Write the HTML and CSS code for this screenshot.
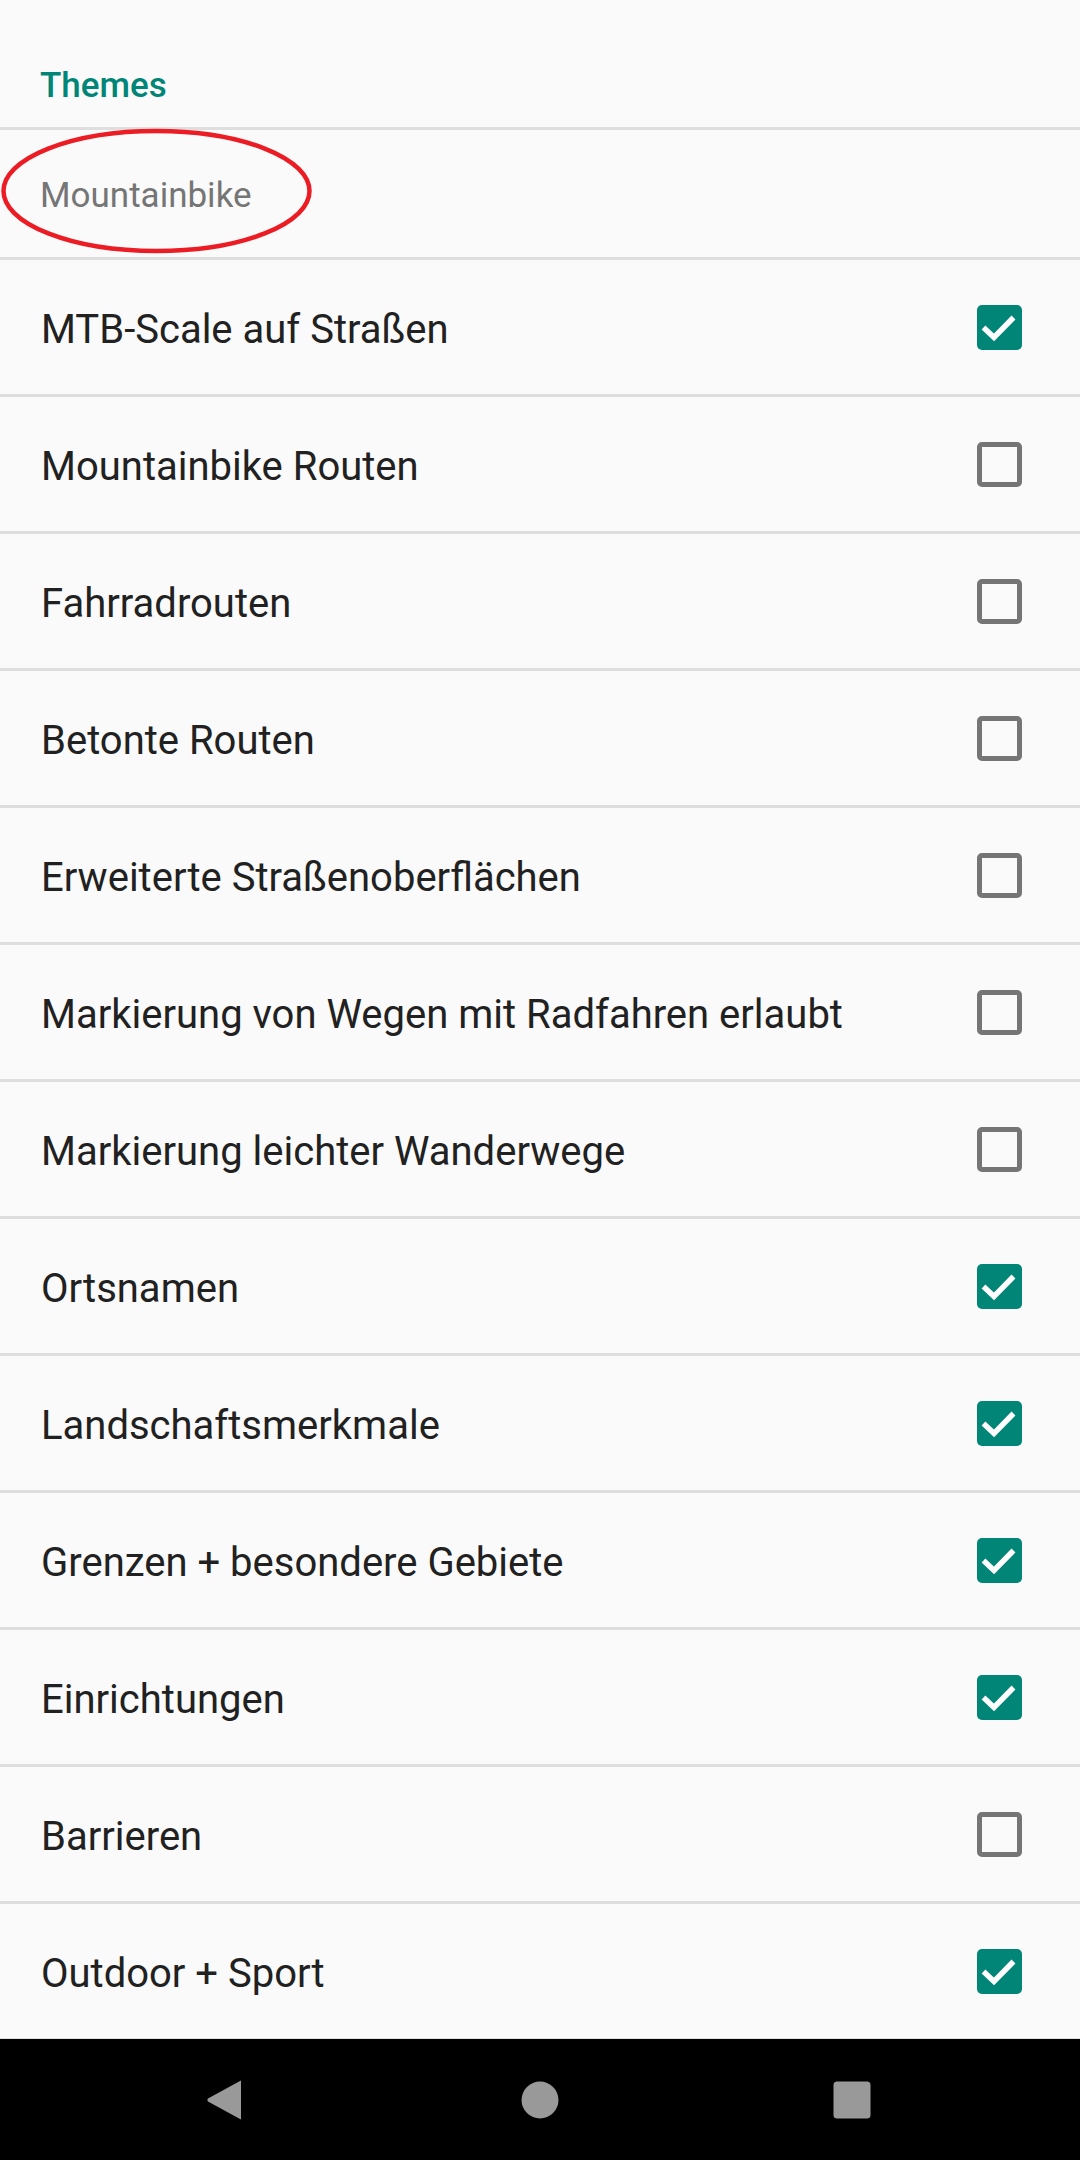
FILE: index.html
```html
<!DOCTYPE html>
<html lang="de">
<head>
<meta charset="utf-8">
<title>Themes</title>
<link rel="stylesheet" href="styles.css">
</head>
<body>
<div class="screen">
  <div class="content">
    <div class="header"><span class="header-title">Themes</span></div>
    <div class="category"><span class="category-title">Mountainbike</span></div>
    <svg class="annotation" width="316" height="132" viewBox="0 0 316 132">
      <ellipse cx="156.5" cy="63" rx="153" ry="60" fill="none" stroke="#ec1c24" stroke-width="4.5"/>
    </svg>
    <ul class="list">
      <li class="item"><span class="label">MTB-Scale auf Straßen</span><span class="box checked"><svg viewBox="0 0 45 45" width="45" height="45"><path d="M6.5 22.5 L17 32.5 L36.5 12.5" fill="none" stroke="#fff" stroke-width="5.5"/></svg></span></li>
      <li class="item"><span class="label">Mountainbike Routen</span><span class="box"></span></li>
      <li class="item"><span class="label">Fahrradrouten</span><span class="box"></span></li>
      <li class="item"><span class="label">Betonte Routen</span><span class="box"></span></li>
      <li class="item"><span class="label">Erweiterte Straßenoberflächen</span><span class="box"></span></li>
      <li class="item"><span class="label">Markierung von Wegen mit Radfahren erlaubt</span><span class="box"></span></li>
      <li class="item"><span class="label">Markierung leichter Wanderwege</span><span class="box"></span></li>
      <li class="item"><span class="label">Ortsnamen</span><span class="box checked"><svg viewBox="0 0 45 45" width="45" height="45"><path d="M6.5 22.5 L17 32.5 L36.5 12.5" fill="none" stroke="#fff" stroke-width="5.5"/></svg></span></li>
      <li class="item"><span class="label">Landschaftsmerkmale</span><span class="box checked"><svg viewBox="0 0 45 45" width="45" height="45"><path d="M6.5 22.5 L17 32.5 L36.5 12.5" fill="none" stroke="#fff" stroke-width="5.5"/></svg></span></li>
      <li class="item"><span class="label">Grenzen + besondere Gebiete</span><span class="box checked"><svg viewBox="0 0 45 45" width="45" height="45"><path d="M6.5 22.5 L17 32.5 L36.5 12.5" fill="none" stroke="#fff" stroke-width="5.5"/></svg></span></li>
      <li class="item"><span class="label">Einrichtungen</span><span class="box checked"><svg viewBox="0 0 45 45" width="45" height="45"><path d="M6.5 22.5 L17 32.5 L36.5 12.5" fill="none" stroke="#fff" stroke-width="5.5"/></svg></span></li>
      <li class="item"><span class="label">Barrieren</span><span class="box"></span></li>
      <li class="item"><span class="label">Outdoor + Sport</span><span class="box checked"><svg viewBox="0 0 45 45" width="45" height="45"><path d="M6.5 22.5 L17 32.5 L36.5 12.5" fill="none" stroke="#fff" stroke-width="5.5"/></svg></span></li>
    </ul>
  </div>
  <nav class="navbar">
    <svg class="nav-back" width="40" height="44" viewBox="0 0 40 44"><path d="M37 3.5 Q37 2 36 3 L4 20.5 Q2.5 22 4 23.5 L36 41 Q37 42 37 40.5 Z" fill="#999"/></svg>
    <svg class="nav-home" width="40" height="44" viewBox="0 0 40 44"><circle cx="20" cy="22" r="18.5" fill="#999"/></svg>
    <svg class="nav-recent" width="40" height="44" viewBox="0 0 40 44"><rect x="1.5" y="3.5" width="37" height="37" rx="3.5" fill="#999"/></svg>
  </nav>
</div>
</body>
</html>
```

FILE: styles.css
```css
html, body {
  margin: 0;
  padding: 0;
  background: #fafafa;
}

.screen {
  width: 1080px;
  height: 2160px;
  display: flex;
  flex-direction: column;
  overflow: hidden;
  font-family: Roboto, "Liberation Sans", sans-serif;
}

.content {
  position: relative;
  height: 2039px;
  overflow: hidden;
  background: #fafafa;
}

.header {
  height: 130px;
  box-sizing: border-box;
  padding: 68px 0 0 40px;
  border-bottom: 3px solid #dedede;
}

.header-title {
  display: block;
  font-size: 35px;
  line-height: 35px;
  font-weight: 500;
  color: #008577;
}

.category {
  height: 130px;
  box-sizing: border-box;
  padding: 0 40px;
  display: flex;
  align-items: center;
  border-bottom: 3px solid #dedede;
}

.category-title {
  font-size: 35px;
  line-height: 35px;
  color: #757575;
  padding-top: 4px;
}

.annotation {
  position: absolute;
  left: 0;
  top: 128px;
}

.list {
  list-style: none;
  margin: 0;
  padding: 0;
}

.item {
  height: 137px;
  box-sizing: border-box;
  display: flex;
  align-items: center;
  justify-content: space-between;
  padding: 0 58px 0 41px;
  border-bottom: 3px solid #dedede;
}

.label {
  font-size: 40px;
  line-height: 40px;
  color: #212121;
  padding-top: 5px;
}

.box {
  width: 45px;
  height: 45px;
  box-sizing: border-box;
  border: 5.5px solid #757575;
  border-radius: 5px;
  flex: none;
}

.box.checked {
  border: none;
  background: #008577;
}

.box svg {
  display: block;
}

.navbar {
  flex: none;
  height: 121px;
  background: #000;
  display: flex;
  align-items: center;
  padding-left: 204px;
}

.navbar svg {
  display: block;
  flex: none;
}

.nav-back {
  margin-right: 276px;
}

.nav-home {
  margin-right: 272px;
}
```
